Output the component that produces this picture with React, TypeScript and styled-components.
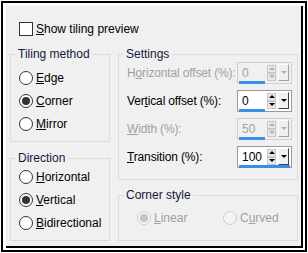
import React from "react";
import styled, { createGlobalStyle } from "styled-components";

const GlobalStyle = createGlobalStyle`
  body {
    margin: 0;
    background: #fff;
    font-family: "Liberation Sans", Arial, sans-serif;
    font-size: 12px;
    color: #000;
  }
`;

const Frame = styled.div`
  box-sizing: border-box;
  width: 306px;
  height: 251px;
  margin: 1px;
  border: 2px solid #000;
  padding: 3px 2px 2px 3px;
  background: #fff;
`;

const Panel = styled.div`
  box-sizing: border-box;
  height: 100%;
  background: #f0f0f0;
  border-right: 2px solid #000;
  border-bottom: 2px solid #000;
  padding: 16px 3px 0 4px;
`;

const CheckRow = styled.label`
  display: flex;
  align-items: center;
  gap: 3px;
  height: 14px;
  margin-left: 9px;
`;

const CheckBox = styled.span`
  box-sizing: border-box;
  width: 14px;
  height: 14px;
  border: 1px solid #333;
  background: #fff;
`;

const Columns = styled.div`
  display: grid;
  grid-template-columns: 100px 180px;
  column-gap: 8px;
  margin-top: 11px;
`;

const Column = styled.div`
  display: flex;
  flex-direction: column;
`;

const Group = styled.fieldset<{ $pad: string; $mt?: number }>`
  margin: ${(p) => p.$mt ?? 0}px 0 0 0;
  padding: ${(p) => p.$pad};
  border: 1px solid #dcdcdc;
  min-width: 0;
`;

const Legend = styled.legend`
  margin-left: 5px;
  padding: 0 2px;
  line-height: 14px;
  color: #14183a;
`;

const RadioRow = styled.label<{ $disabled?: boolean }>`
  display: flex;
  align-items: center;
  gap: 3px;
  height: 23px;
  padding-left: 8px;
  white-space: nowrap;
  color: ${(p) => (p.$disabled ? "#a0a0a0" : "#000")};
`;

const RadioCircle = styled.span<{ $checked?: boolean; $disabled?: boolean }>`
  box-sizing: border-box;
  width: 14px;
  height: 14px;
  border-radius: 50%;
  border: 1px solid ${(p) => (p.$disabled ? "#cdcdcd" : "#333")};
  background: ${(p) => (p.$disabled ? "#f4f4f4" : "#fff")};
  display: flex;
  align-items: center;
  justify-content: center;
  &::after {
    content: "";
    width: 8px;
    height: 8px;
    border-radius: 50%;
    background: ${(p) => (p.$disabled ? "#c4c4c4" : "#333")};
    display: ${(p) => (p.$checked ? "block" : "none")};
  }
`;

const Key = styled.span`
  text-decoration: underline;
`;

const FieldRow = styled.div<{ $disabled?: boolean }>`
  display: flex;
  align-items: center;
  justify-content: space-between;
  height: 22px;
  padding-left: 8px;
  white-space: nowrap;
  letter-spacing: -0.15px;
  color: ${(p) => (p.$disabled ? "#a0a0a0" : "#000")};
  & + & {
    margin-top: 6px;
  }
`;

const Spin = styled.div<{ $disabled?: boolean }>`
  box-sizing: border-box;
  flex: none;
  width: 55px;
  height: 22px;
  border: 1px solid ${(p) => (p.$disabled ? "#d0d0d0" : "#9a9a9a")};
  background: ${(p) => (p.$disabled ? "#f0f0f0" : "#fff")};
  display: flex;
  flex-direction: column;
  padding: 1px;
  letter-spacing: 0;
`;

const SpinTop = styled.div`
  display: flex;
  align-items: center;
  height: 17px;
`;

const SpinValue = styled.span<{ $disabled?: boolean }>`
  flex: 1;
  padding-left: 3px;
  color: ${(p) => (p.$disabled ? "#a0a0a0" : "#000")};
`;

const Arrows = styled.div`
  display: flex;
  flex-direction: column;
  width: 9px;
  height: 16px;
  margin-right: 2px;
`;

const ArrowBtn = styled.div<{ $down?: boolean; $disabled?: boolean }>`
  flex: 1;
  display: flex;
  align-items: center;
  justify-content: center;
  background: #e8e8e8;
  border: 1px solid #c8c8c8;
  &::after {
    content: "";
    border-left: 3px solid transparent;
    border-right: 3px solid transparent;
    ${(p) => (p.$down ? "border-top" : "border-bottom")}: 3px solid
      ${(p) => (p.$disabled ? "#b0b0b0" : "#000")};
  }
`;

const DropBtn = styled.div<{ $disabled?: boolean }>`
  box-sizing: border-box;
  width: 11px;
  height: 17px;
  margin-right: 1px;
  background: #f0f0f0;
  border-top: 1px solid #fff;
  border-left: 1px solid #fff;
  border-right: 1px solid ${(p) => (p.$disabled ? "#a0a0a0" : "#404040")};
  border-bottom: 1px solid ${(p) => (p.$disabled ? "#a0a0a0" : "#404040")};
  display: flex;
  align-items: center;
  justify-content: center;
  &::after {
    content: "";
    border-left: 3px solid transparent;
    border-right: 3px solid transparent;
    border-top: 3px solid ${(p) => (p.$disabled ? "#b0b0b0" : "#000")};
  }
`;

const BarTrack = styled.div`
  height: 3px;
`;

const Bar = styled.div`
  height: 3px;
  background: #3a8ee8;
`;

const CornerRow = styled.div`
  display: grid;
  grid-template-columns: 86px 1fr;
  padding-left: 10px;
`;

type SpinProps = { value: string; fraction: number; disabled?: boolean };

const SpinBox = ({ value, fraction, disabled }: SpinProps) => (
  <Spin $disabled={disabled}>
    <SpinTop>
      <SpinValue $disabled={disabled}>{value}</SpinValue>
      <Arrows>
        <ArrowBtn $disabled={disabled} />
        <ArrowBtn $down $disabled={disabled} />
      </Arrows>
      <DropBtn $disabled={disabled} />
    </SpinTop>
    <BarTrack>
      <Bar style={{ width: `${fraction * 100}%` }} />
    </BarTrack>
  </Spin>
);

type RadioProps = {
  pre?: string;
  k: string;
  post: string;
  checked?: boolean;
  disabled?: boolean;
};

const Radio = ({ pre, k, post, checked, disabled }: RadioProps) => (
  <RadioRow $disabled={disabled}>
    <RadioCircle $checked={checked} $disabled={disabled} />
    <span>
      {pre}
      <Key>{k}</Key>
      {post}
    </span>
  </RadioRow>
);

export default function App() {
  return (
    <>
      <GlobalStyle />
      <Frame>
        <Panel>
          <CheckRow>
            <CheckBox />
            <span>
              <Key>S</Key>how tiling preview
            </span>
          </CheckRow>
          <Columns>
            <Column>
              <Group $pad="5px 0 6px 0">
                <Legend>Tiling method</Legend>
                <Radio k="E" post="dge" />
                <Radio k="C" post="orner" checked />
                <Radio k="M" post="irror" />
              </Group>
              <Group $pad="0 0 6px 0" $mt={9}>
                <Legend>Direction</Legend>
                <Radio k="H" post="orizontal" />
                <Radio k="V" post="ertical" checked />
                <Radio k="B" post="idirectional" />
              </Group>
            </Column>
            <Column>
              <Group $pad="1px 5px 11px 0">
                <Legend>Settings</Legend>
                <FieldRow $disabled>
                  <span>
                    H<Key>o</Key>rizontal offset (%):
                  </span>
                  <SpinBox value="0" fraction={0.5} disabled />
                </FieldRow>
                <FieldRow>
                  <span>
                    Ver<Key>t</Key>ical offset (%):
                  </span>
                  <SpinBox value="0" fraction={0.5} />
                </FieldRow>
                <FieldRow $disabled>
                  <span>
                    <Key>W</Key>idth (%):
                  </span>
                  <SpinBox value="50" fraction={0.5} disabled />
                </FieldRow>
                <FieldRow>
                  <span>
                    <Key>T</Key>ransition (%):
                  </span>
                  <SpinBox value="100" fraction={1} />
                </FieldRow>
              </Group>
              <Group $pad="4px 0 11px 0" $mt={8}>
                <Legend>Corner style</Legend>
                <CornerRow>
                  <Radio k="L" post="inear" checked disabled />
                  <Radio pre="C" k="u" post="rved" disabled />
                </CornerRow>
              </Group>
            </Column>
          </Columns>
        </Panel>
      </Frame>
    </>
  );
}
